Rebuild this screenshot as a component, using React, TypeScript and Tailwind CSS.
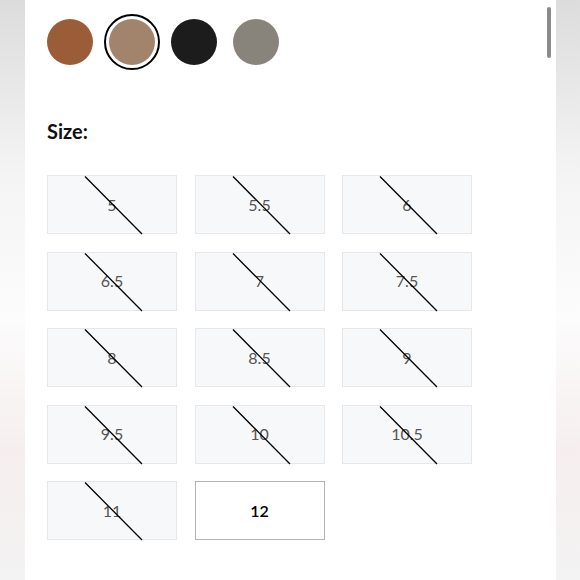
const swatches = [
  { color: 'bg-[#9a5d37]', selected: false },
  { color: 'bg-[#a2846c]', selected: true },
  { color: 'bg-[#1c1c1c]', selected: false },
  { color: 'bg-[#88847c]', selected: false },
];

const sizes = ['5', '5.5', '6', '6.5', '7', '7.5', '8', '8.5', '9', '9.5', '10', '10.5', '11', '12'];
const available = ['12'];

export default function App() {
  return (
    <div className="w-[580px] h-[580px] overflow-hidden flex bg-[linear-gradient(to_bottom,#dcdcdc_0%,#f4f4f4_30%,#fcfcfc_55%,#f6eeee_78%,#f3f3f3_100%)] font-['Lato','Liberation_Sans',sans-serif]">
      <div className="relative ml-[25px] w-[531px] h-full bg-white pl-[17px] pt-[14px]">
        {/* Scrollbar */}
        <div className="absolute right-[5px] top-[7px] w-[4px] h-[51px] rounded-full bg-[#8a8a8a]" />

        {/* Colour swatches */}
        <div className="flex gap-[6px]">
          {swatches.map((s, i) => (
            <div
              key={i}
              className={`w-[56px] h-[56px] rounded-full p-[3px] border-2 ${s.selected ? 'border-black' : 'border-transparent'}`}
            >
              <div className={`w-full h-full rounded-full ${s.color}`} />
            </div>
          ))}
        </div>

        <div className="ml-[5px] mt-[47px] text-[20px] leading-[28px] font-bold text-[#111]">Size:</div>

        <div className="ml-[5px] mt-[30px] grid grid-cols-[repeat(3,130px)] gap-x-[17.5px] gap-y-[17.5px]">
          {sizes.map((size) => {
            const ok = available.includes(size);
            return ok ? (
              <div
                key={size}
                className="h-[59px] flex items-center justify-center bg-white border-[1.5px] border-[#b3b3b6] text-[16px] font-semibold text-black"
              >
                {size}
              </div>
            ) : (
              <div
                key={size}
                className="relative h-[59px] flex items-center justify-center bg-[#f7f8fa] border border-[#e6e7ea] text-[16px] text-[#555]"
              >
                {size}
                <svg className="absolute left-0 top-0" width="130" height="59" viewBox="0 0 130 59">
                  <line x1="37" y1="0.5" x2="94" y2="58" stroke="#000" strokeWidth="1.3" />
                </svg>
              </div>
            );
          })}
        </div>
      </div>
    </div>
  );
}
